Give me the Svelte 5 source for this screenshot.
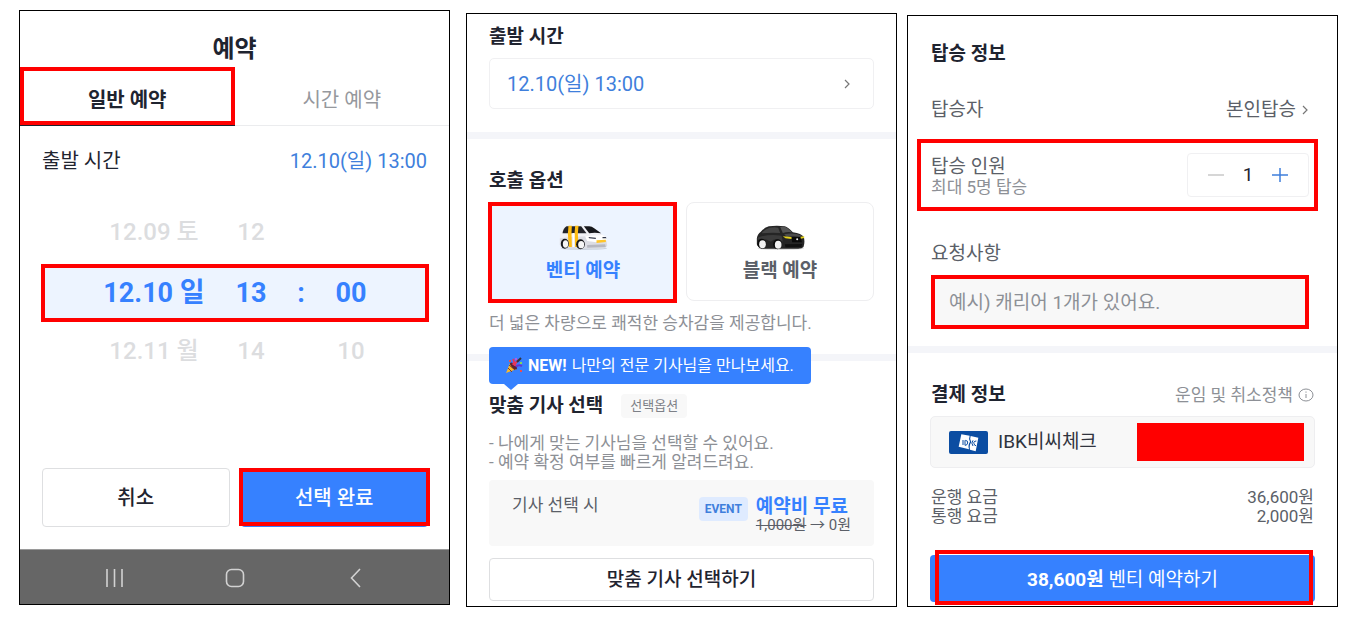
<script>
  const MAX_RIDERS = 5;

  const dates = ['12.09 토', '12.10 일', '12.11 월'];
  const hours = ['12', '13', '14'];
  const minutes = ['', '00', '10'];

  const fares = [
    { name: '운행 요금', price: 36600 },
    { name: '통행 요금', price: 2000 },
  ];

  let tab = $state('normal');
  let option = $state('venti');
  let riders = $state(1);
  let memo = $state('');

  const total = fares.reduce((sum, fare) => sum + fare.price, 0);
  const won = (value) => value.toLocaleString('en-US') + '원';

  const changeRiders = (step) => {
    riders = Math.min(MAX_RIDERS, Math.max(1, riders + step));
  };
</script>

<main>
  <!-- Step 1: pick the time -->
  <section class="panel pick">
    <h1>예약</h1>
    <div class="tabs">
      <button class:active={tab === 'normal'} onclick={() => (tab = 'normal')}>
        일반 예약
        <span class="mark"></span>
      </button>
      <button class:active={tab === 'hourly'} onclick={() => (tab = 'hourly')}>시간 예약</button>
    </div>

    <div class="depart">
      <span>출발 시간</span>
      <span class="blue">12.10(일) 13:00</span>
    </div>

    <div class="wheel">
      {#each dates as date, i}
        <div class="wheel-row" class:selected={i === 1}>
          <span>{date}</span>
          <span>{hours[i]}</span>
          <span>{i === 1 ? ':' : ''}</span>
          <span>{minutes[i]}</span>
          {#if i === 1}<i class="mark"></i>{/if}
        </div>
      {/each}
    </div>

    <div class="actions">
      <button class="outline">취소</button>
      <button class="primary">선택 완료<span class="mark"></span></button>
    </div>

    <nav>
      <button aria-label="최근 앱">
        <svg width="20" height="20" viewBox="0 0 20 20"><path d="M2 1v18M9.500 1v18M17 1v18" /></svg>
      </button>
      <button aria-label="홈">
        <svg width="20" height="20" viewBox="0 0 20 20"><rect x="1.500" y="1.500" width="17" height="17" rx="5" /></svg>
      </button>
      <button aria-label="뒤로">
        <svg width="20" height="20" viewBox="0 0 20 20"><path d="M15 1L6.500 10l8.500 9" /></svg>
      </button>
    </nav>
  </section>

  <!-- Step 2: call options -->
  <section class="panel options">
    <div class="block first">
      <h2>출발 시간</h2>
      <button class="time">
        12.10(일) 13:00
        <svg class="chevron" width="8" height="10" viewBox="0 0 8 10"><path d="M2 1l4 4-4 4" /></svg>
      </button>
    </div>

    <div class="block second">
      <h2>호출 옵션</h2>
      <div class="cards">
        <button class:chosen={option === 'venti'} onclick={() => (option = 'venti')}>
          <svg width="49" height="26" viewBox="0 0 146 78">
            <ellipse cx="74" cy="70" rx="70" ry="5" fill="#cbd3df" />
            <path d="M2 34Q4 16 15 6Q20 2 32 2H88Q98 2 106 9L127 27Q140 32 144 43V62Q142 69 132 70H20Q3 68 2 58Z" fill="#f1f1f5" />
            <path d="M2 40Q40 34 88 34L140 38L144 62Q142 69 132 70H20Q3 68 2 58Z" fill="#dcdde4" />
            <path d="M78 34L130 30Q142 36 143 46L112 52L84 48Z" fill="#fff" />
            <path d="M10 25Q12 10 22 4H66L82 25Z" fill="#23242a" />
            <path d="M74 4H90Q98 4 105 10L126 25Q106 21 90 25Z" fill="#17181c" />
            <path d="M28 2H38L37 26L38 66H29L26 26ZM48 2H58L56 26L58 66H48L46 26Z" fill="#ffbd12" />
            <path d="M43 24V66" stroke="#fff" stroke-width="6" />
            <path d="M88 36l22 2v4l-20-2zM130 36h10l2 4h-12z" fill="#33384a" />
            <path d="M112 46l28-2v7l-28 3z" fill="#ffc52a" />
            <path d="M84 60L138 58L140 66L84 68Z" fill="#b6b8c1" />
            <ellipse cx="17" cy="56" rx="12" ry="15" fill="#17181c" />
            <ellipse cx="19" cy="57" rx="8" ry="11" fill="#f5f5f5" />
            <ellipse cx="64" cy="58" rx="13" ry="15" fill="#17181c" />
            <ellipse cx="66" cy="59" rx="9" ry="11" fill="#f5f5f5" />
          </svg>
          <span>벤티 예약</span>
          {#if option === 'venti'}<i class="mark"></i>{/if}
        </button>
        <button class:chosen={option === 'black'} onclick={() => (option = 'black')}>
          <svg width="49" height="26" viewBox="0 0 146 78">
            <ellipse cx="74" cy="70" rx="70" ry="5" fill="#dcdcdc" />
            <path d="M2 40Q4 26 14 20Q24 8 38 4Q62 0 86 4Q96 7 110 22Q136 26 143 36Q147 52 142 66Q138 71 126 71H22Q4 68 2 58Z" fill="#252525" />
            <path d="M18 22Q28 11 40 8Q56 5 66 8L72 24Q42 22 18 25Z" fill="#454545" />
            <path d="M72 6Q86 4 93 9L108 22Q92 20 80 24Z" fill="#555" />
            <path d="M4 38Q36 26 76 32L80 50Q60 36 44 50Q28 38 4 44Z" fill="#3b3b3b" />
            <path d="M84 28Q112 22 138 32L130 35Q108 32 92 36Z" fill="#4b4b4b" />
            <path d="M106 36H134L137 52H108Z" fill="#090909" />
            <path d="M80 34L106 36V42L88 40ZM133 35L144 34V39L134 41Z" fill="#e4d21b" />
            <circle cx="123" cy="43" r="3" fill="#eee" />
            <path d="M86 58L138 57L136 66L88 67Z" fill="#101010" />
            <ellipse cx="17" cy="56" rx="13" ry="15" fill="#0c0c0c" />
            <ellipse cx="19" cy="58" rx="10" ry="12" fill="#f2f2f2" />
            <ellipse cx="64" cy="58" rx="13" ry="15" fill="#0c0c0c" />
            <ellipse cx="66" cy="59" rx="10" ry="12" fill="#f2f2f2" />
          </svg>
          <span>블랙 예약</span>
          {#if option === 'black'}<i class="mark"></i>{/if}
        </button>
      </div>
      <p class="desc">더 넓은 차량으로 쾌적한 승차감을 제공합니다.</p>
    </div>

    <div class="block third">
      <div class="tooltip">
        <svg width="18" height="18" viewBox="0 0 18 18">
          <path d="M1 16L5 6Q10 8 12 12Z" fill="#f9b92c" />
          <path d="M3 11l4 4M4 8l6 5" stroke="#8a3f20" stroke-width="1" />
          <ellipse cx="8.500" cy="9" rx="2" ry="4.500" transform="rotate(-45 8.500 9)" fill="#5d2433" />
          <path d="M8 8Q10 5 8 2M10 9Q10 5 14 3" fill="none" stroke="#e3365d" stroke-width="2" />
          <path d="M11 10Q13 7 17 9" fill="none" stroke="#6b35c9" stroke-width="2" />
          <path d="M12 5l4-4" stroke="#33343f" stroke-width="2" />
          <path d="M4 3h2v2H4zM15 13h2v2h-2z" fill="#ee4d4d" />
          <path d="M15 5h2v2h-2z" fill="#7fdb5c" />
          <path d="M10 1h2v2h-2z" fill="#b05be8" />
        </svg>
        <strong>NEW!</strong> 나만의 전문 기사님을 만나보세요.
      </div>
      <div class="heading">
        <h2>맞춤 기사 선택</h2>
        <span class="chip">선택옵션</span>
      </div>
      <p class="notes">- 나에게 맞는 기사님을 선택할 수 있어요.<br />- 예약 확정 여부를 빠르게 알려드려요.</p>
      <div class="event">
        <span class="when">기사 선택 시</span>
        <span class="badge">EVENT</span>
        <div class="free">
          <strong>예약비 무료</strong>
          <span><s>1,000원</s> → 0원</span>
        </div>
      </div>
      <button class="outline choose">맞춤 기사 선택하기</button>
    </div>
  </section>

  <!-- Step 3: rider and payment -->
  <section class="panel confirm">
    <div class="rider">
      <h2>탑승 정보</h2>
      <div class="row who">
        <span>탑승자</span>
        <button class="self">
          본인탑승
          <svg class="chevron" width="8" height="10" viewBox="0 0 8 10"><path d="M2 1l4 4-4 4" /></svg>
        </button>
      </div>
      <div class="count">
        <div class="count-text">
          <span>탑승 인원</span>
          <small>최대 {MAX_RIDERS}명 탑승</small>
        </div>
        <div class="stepper">
          <button aria-label="인원 줄이기" onclick={() => changeRiders(-1)}>
            <svg width="16" height="16" viewBox="0 0 16 16"><path d="M0 8h16" stroke="#c8c8c8" stroke-width="1.500" /></svg>
          </button>
          <output>{riders}</output>
          <button aria-label="인원 늘리기" onclick={() => changeRiders(1)}>
            <svg width="16" height="16" viewBox="0 0 16 16"><path d="M0 8h16M8 1v14" stroke="#3f7fdc" stroke-width="1.500" /></svg>
          </button>
        </div>
        <i class="mark"></i>
      </div>
      <label for="memo">요청사항</label>
      <div class="memo">
        <input id="memo" type="text" placeholder="예시) 캐리어 1개가 있어요." bind:value={memo} />
        <i class="mark"></i>
      </div>
    </div>

    <div class="payment">
      <div class="row">
        <h2>결제 정보</h2>
        <a class="policy" href="#policy">
          운임 및 취소정책
          <svg width="16" height="14" viewBox="0 0 16 14">
            <ellipse cx="8" cy="7" rx="7" ry="6" />
            <path d="M8 6v4M8 3.500v1.200" />
          </svg>
        </a>
      </div>
      <div class="card">
        <svg width="39" height="23" viewBox="0 0 117 69">
          <rect width="117" height="69" rx="6" fill="#0b4da2" />
          <path d="M37 10L62 14Q58 24 63 32Q56 42 60 55L29 47Z" fill="#fff" />
          <path d="M65 15L88 20L80 61L63 56Q60 43 67 33Q61 24 65 15Z" fill="#fff" />
          <path d="M42 27V42M48 28V43M49 28Q58 29 56 36Q55 43 48 43M72 28Q65 36 72 45M82 30Q72 31 75 38Q76 44 81 44" fill="none" stroke="#0b4da2" stroke-width="3" />
        </svg>
        <span>IBK비씨체크</span>
        <i class="hidden-number"></i>
      </div>
      <dl>
        {#each fares as fare}
          <div class="row">
            <dt>{fare.name}</dt>
            <dd>{won(fare.price)}</dd>
          </div>
        {/each}
      </dl>
      <button class="primary book"><strong>{won(total)}</strong> 벤티 예약하기<span class="mark"></span></button>
    </div>
  </section>
</main>

<style>
  :global(body) {
    margin: 0;
    background: #fff;
  }

  main {
    display: flex;
    align-items: flex-start;
    padding: 10px 15px 13px 19px;
    font-family: Roboto, "Noto Sans CJK KR", sans-serif;
    font-size: 19px;
    line-height: 24px;
    color: #1f2430;
  }

  main * {
    box-sizing: border-box;
  }

  h1, h2, p, dl, dd {
    margin: 0;
  }

  h2 {
    font-size: 19px;
    line-height: 24px;
    font-weight: 700;
  }

  button {
    position: relative;
    padding: 0;
    border: none;
    background: none;
    font: inherit;
    color: inherit;
    cursor: pointer;
  }

  svg {
    flex: none;
  }

  .panel {
    flex: 1 1 0;
    min-width: 0;
    border: 1px solid #000;
    white-space: nowrap;
  }

  .options {
    margin: 3px 0 0 16px;
  }

  .confirm {
    margin: 5px 0 0 10px;
    color: #5b5f68;
  }

  .confirm h2 {
    color: #1f2430;
  }

  /* red frame around the thing to press */
  .mark {
    position: absolute;
    inset: 0;
    border: 4px solid #f00;
    pointer-events: none;
  }

  .row {
    display: flex;
    justify-content: space-between;
    align-items: center;
  }

  .outline {
    border: 1px solid #dedfe1;
    border-radius: 4px;
    font-weight: 500;
  }

  .primary {
    border-radius: 4px;
    background: #3681ff;
    color: #fff;
    font-weight: 500;
  }

  .chevron {
    fill: none;
    stroke: #777;
    stroke-width: 1.2;
  }

  /* time picker */
  h1 {
    padding-top: 20px;
    font-size: 24px;
    line-height: 36px;
    text-align: center;
  }

  .tabs {
    display: flex;
    border-bottom: 1px solid #ebecee;
  }

  .tabs button {
    flex: 1;
    height: 58px;
    padding-top: 7px;
    font-size: 20px;
    color: #96989d;
  }

  .tabs .active {
    color: #1f2430;
    font-weight: 700;
    box-shadow: 0 1px #1f2430;
  }

  .depart {
    display: flex;
    justify-content: space-between;
    align-items: center;
    height: 74px;
    padding: 0 22px 4px;
    font-size: 20px;
  }

  .blue {
    color: #3f7fdc;
  }

  .wheel {
    display: grid;
    grid-template-rows: 64px 58px 58px;
    margin: 0 20px 0 21px;
  }

  .wheel-row {
    position: relative;
    display: grid;
    grid-template-columns: 144px 50px 50px 50px;
    justify-content: center;
    align-items: center;
    padding-right: 12px;
    font-size: 24px;
    font-weight: 500;
    text-align: center;
    color: #dcdddf;
  }

  .wheel-row.selected {
    background: #edf4ff;
    color: #3681ff;
    font-size: 27px;
    font-weight: 700;
  }

  .actions {
    display: grid;
    grid-template-columns: 1fr 1fr;
    gap: 11px;
    margin: 88px 21px 22px 22px;
    font-size: 20px;
  }

  .actions button {
    height: 59px;
  }

  .actions .mark {
    inset: 0 -2px 1px;
  }

  nav {
    display: grid;
    grid-template-columns: repeat(3, 120px);
    justify-content: center;
    height: 55px;
    padding-top: 1px;
    border-top: 1px solid #9a9a9a;
    background: #666;
  }

  nav button {
    display: flex;
    justify-content: center;
    align-items: center;
  }

  nav svg {
    fill: none;
    stroke: #d2d2d2;
    stroke-width: 1.6;
  }

  /* call options */
  .block {
    padding: 0 22px;
  }

  .first {
    padding-top: 11px;
    padding-bottom: 23px;
    border-bottom: 7px solid #f4f5f9;
  }

  .time {
    display: flex;
    justify-content: space-between;
    align-items: center;
    width: 100%;
    height: 51px;
    margin-top: 9px;
    padding: 0 22px 0 17px;
    border: 1px solid #f0f0f2;
    border-radius: 5px;
    font-size: 20px;
    color: #3f7fdc;
  }

  .second {
    padding-top: 30px;
    padding-bottom: 20px;
    border-bottom: 7px solid #f4f5f9;
  }

  .cards {
    display: grid;
    grid-template-columns: 1fr 1fr;
    gap: 9px;
    margin-top: 9px;
  }

  .cards button {
    display: flex;
    flex-direction: column;
    align-items: center;
    gap: 8px;
    height: 99px;
    padding-top: 22px;
    border: 1px solid #eeeef0;
    border-radius: 8px;
    font-weight: 700;
    color: #5b5f68;
  }

  .cards .chosen {
    background: #edf4ff;
    color: #3681ff;
  }

  .cards .mark {
    inset: -1px -1px -3px -2px;
  }

  .desc {
    margin-top: 11px;
    font-size: 17px;
    line-height: 22px;
    color: #8d9096;
  }

  .third {
    position: relative;
    padding-top: 33px;
    padding-bottom: 5px;
  }

  .tooltip {
    position: absolute;
    top: -14px;
    left: 22px;
    display: flex;
    align-items: center;
    gap: 5px;
    width: 322px;
    height: 37px;
    padding-left: 16px;
    border-radius: 4px;
    background: #3681ff;
    color: #fff;
    font-size: 16px;
  }

  .tooltip::after {
    content: "";
    position: absolute;
    top: 100%;
    left: 15px;
    border: 7px solid transparent;
    border-top: 6px solid #3681ff;
    border-bottom: none;
  }

  .heading {
    display: flex;
    align-items: center;
    gap: 18px;
  }

  .chip {
    padding: 0 9px;
    border-radius: 4px;
    background: #f8f8f8;
    font-size: 13px;
    color: #7d8087;
  }

  .notes {
    margin-top: 16px;
    font-size: 17px;
    line-height: 19px;
    color: #8d9096;
  }

  .event {
    display: flex;
    align-items: flex-start;
    height: 66px;
    margin: 8px 0 12px;
    padding: 13px 23px 0;
    border-radius: 4px;
    background: #f8f8f8;
    font-size: 17px;
    color: #5b5f68;
  }

  .badge {
    margin: 4px 8px 0 auto;
    padding: 0 6px;
    border-radius: 4px;
    background: #dfebff;
    color: #3f7fdc;
    font-size: 12px;
    font-weight: 700;
  }

  .free {
    display: flex;
    flex-direction: column;
    padding-top: 4px;
    font-size: 15px;
    line-height: 19px;
  }

  .free strong {
    color: #3681ff;
    font-size: 19px;
  }

  .choose {
    width: 100%;
    height: 43px;
  }

  /* rider and payment */
  .rider {
    padding: 26px 23px 17px;
    border-bottom: 7px solid #f4f5f9;
  }

  .who {
    margin: 32px 5px 17px 0;
  }

  .self {
    display: flex;
    align-items: center;
    gap: 5px;
  }

  .count {
    position: relative;
    display: flex;
    justify-content: space-between;
    align-items: center;
    height: 72px;
    margin: 0 -4px 31px -14px;
    padding: 0 9px 0 14px;
  }

  .count-text {
    display: grid;
    padding-top: 3px;
    line-height: 21px;
  }

  .count small {
    font-size: 17px;
    color: #8d9096;
  }

  .stepper {
    display: flex;
    justify-content: center;
    align-items: center;
    width: 122px;
    height: 44px;
    border: 1px solid #f0f0f2;
    border-radius: 4px;
    color: #1f2430;
  }

  .stepper button {
    display: flex;
  }

  .stepper output {
    width: 48px;
    text-align: center;
  }

  label {
    display: block;
  }

  .memo {
    position: relative;
    margin: 9px 5px 0 0;
  }

  input {
    display: block;
    width: 100%;
    height: 54px;
    padding: 0 18px;
    border: none;
    background: #f8f8f8;
    font: inherit;
    color: #1f2430;
  }

  input::placeholder {
    color: #8d9096;
    opacity: 1;
  }

  .payment {
    padding: 30px 22px 4px;
  }

  .payment .row {
    padding: 0 1px;
  }

  .policy {
    display: flex;
    align-items: center;
    gap: 5px;
    font-size: 17px;
    color: #8d9096;
    text-decoration: none;
  }

  .policy svg {
    fill: none;
    stroke: #8d9096;
  }

  .card {
    display: flex;
    align-items: center;
    gap: 10px;
    height: 52px;
    margin: 9px 0 20px;
    padding: 0 10px 0 18px;
    border: 1px solid #eeeef0;
    border-radius: 5px;
    background: #f8f8f8;
    color: #30343e;
  }

  .hidden-number {
    width: 167px;
    height: 38px;
    margin-left: auto;
    background: #f00;
  }

  dl {
    font-size: 17px;
    line-height: 19px;
  }

  .book {
    width: 100%;
    height: 47px;
    margin-top: 29px;
    padding-top: 2px;
    font-weight: 400;
  }

  .book .mark {
    inset: -5px 2px -3px 5px;
  }
</style>
